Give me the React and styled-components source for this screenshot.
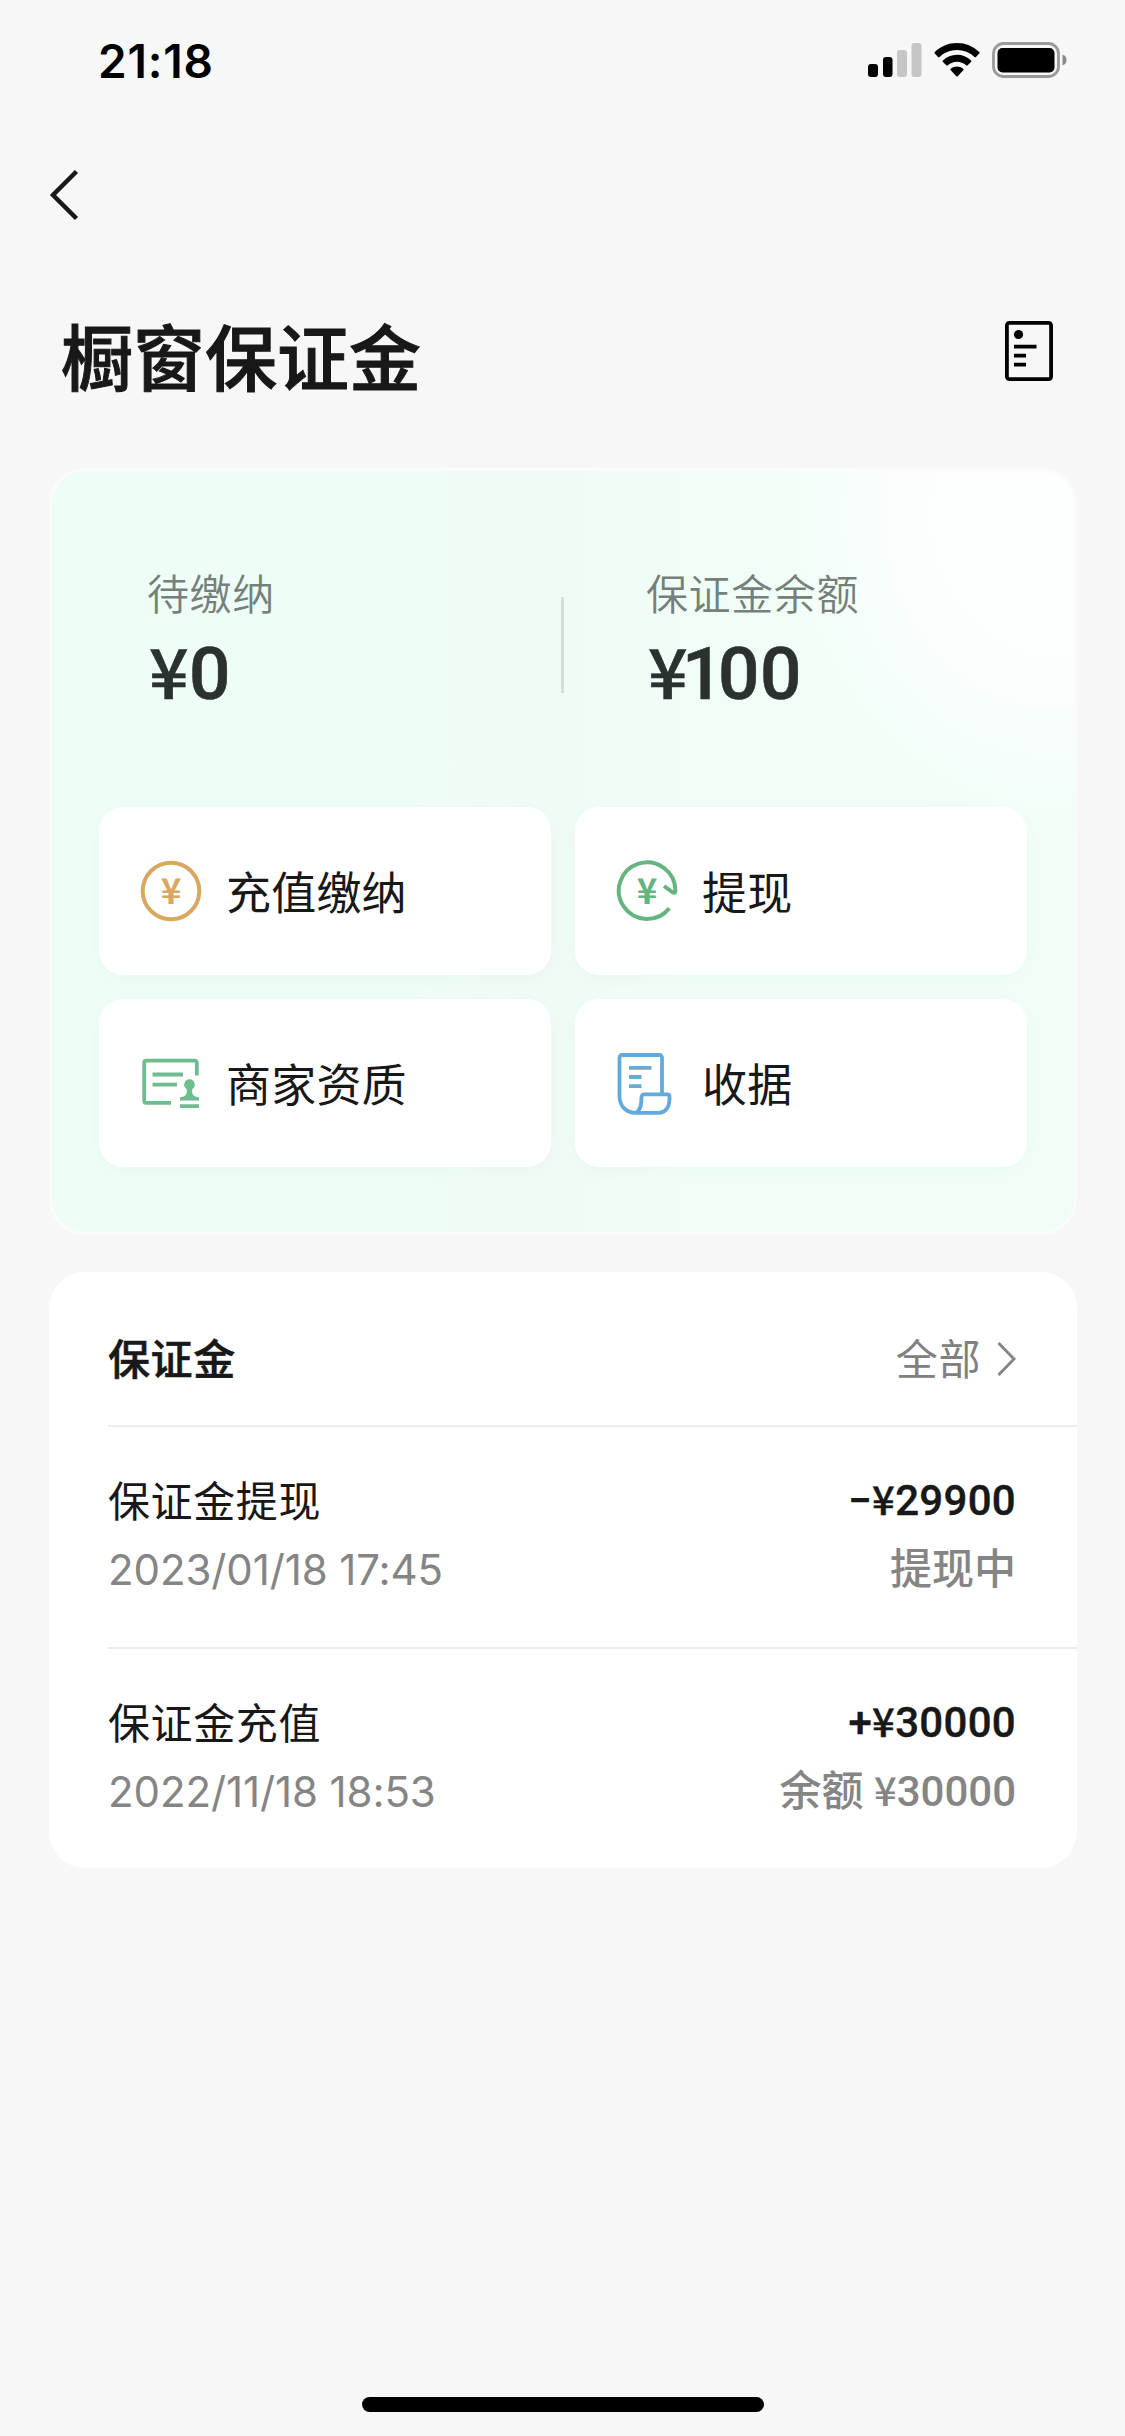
import React from "react";
import styled, { createGlobalStyle } from "styled-components";

const GlobalStyle = createGlobalStyle`
  * {
    box-sizing: border-box;
  }
  body {
    margin: 0;
    background: #f7f7f7;
    font-family: Inter, "Noto Sans CJK SC", sans-serif;
    color: #181818;
  }
  svg {
    display: block;
    flex: none;
  }
`;

const Page = styled.div`
  width: 1125px;
  height: 2436px;
  display: flex;
  flex-direction: column;
  background: #f7f7f7;
  overflow: hidden;
`;

const StatusBar = styled.header`
  height: 132px;
  padding: 34px 58px 0 98px;
  display: flex;
  justify-content: space-between;
  align-items: flex-start;
`;

const Time = styled.span`
  font: 600 46px/54px Inter, sans-serif;
  letter-spacing: 0.8px;
  color: #000;
`;

const StatusIcons = styled.div`
  display: flex;
  gap: 12px;
  padding-top: 8px;
`;

const NavBar = styled.nav`
  height: 126px;
  padding-left: 48px;
  display: flex;
  align-items: center;
`;

const TitleRow = styled.div`
  height: 210px;
  padding: 48px 72px 0 61px;
  display: flex;
  justify-content: space-between;
  align-items: flex-start;
`;

const Title = styled.h1`
  margin: 0;
  font: 500 72px/96px "Noto Sans CJK SC", sans-serif;
  -webkit-text-stroke: 1px #181818;
`;

const DocButton = styled.div`
  padding-top: 15px;
`;

const Main = styled.main`
  padding: 0 48px 0 49px;
  display: flex;
  flex-direction: column;
  gap: 37px;
  flex: 1;
`;

const BalanceCard = styled.section`
  height: 767px;
  padding: 0 48px 0 47px;
  border: 3px solid rgba(255, 255, 255, 0.55);
  border-radius: 36px;
  background:
    radial-gradient(ellipse 290px 330px at 98% 6%, #fdfefe 40%, rgba(250, 253, 252, 0) 100%),
    linear-gradient(90deg, rgba(240, 248, 244, 0) 36%, rgba(240, 249, 245, 0.7) 48%, rgba(241, 254, 248, 0.7) 62%),
    #eefdf5;
  background-clip: padding-box;
`;

const Balances = styled.div`
  height: 336px;
  padding: 96px 0 0 48px;
  display: flex;
`;

const Balance = styled.div`
  width: ${props => props.width};
  display: flex;
  flex-direction: column;
`;

const BalanceLabel = styled.span`
  font: 400 42px/50px "Noto Sans CJK SC", sans-serif;
  font-weight: 350;
  letter-spacing: 0.6px;
  color: #75807b;
`;

const BalanceValue = styled.span`
  margin: 18px 0 0 2px;
  font: 500 73px/76px Roboto, sans-serif;
  letter-spacing: 0.5px;
  color: #2a312e;
  -webkit-text-stroke: 0.6px #2a312e;
`;

// the digit 1 sits tight between its neighbours
const Tight = styled.span`
  letter-spacing: -5.5px;
`;

const YenSign = styled.span`
  font-family: "Noto Sans CJK SC", sans-serif;
  font-size: 0.95em;
  line-height: 1;
`;

const Separator = styled.div`
  width: 3px;
  height: 96px;
  margin: 30px 82px 0 0;
  background: #d6dedb;
`;

const Actions = styled.div`
  display: grid;
  grid-template-columns: 452px 452px;
  grid-auto-rows: 168px;
  gap: 24px;
`;

const Action = styled.div`
  padding-left: 41px;
  display: flex;
  align-items: center;
  gap: 24px;
  background: #fff;
  border-radius: 24px;
  box-shadow: 0 4px 14px rgba(120, 150, 135, 0.04);
`;

const ActionLabel = styled.span`
  padding-bottom: 1px;
  font: 400 45px/60px "Noto Sans CJK SC", sans-serif;
  letter-spacing: 0.2px;
`;

const RecordCard = styled.section`
  height: 596px;
  padding-left: 59px;
  border-radius: 36px;
  background: #fff;
`;

const RecordHeader = styled.div`
  height: 153px;
  padding: 16px 61px 0 0;
  display: flex;
  justify-content: space-between;
  align-items: center;
`;

const RecordTitle = styled.h2`
  margin: 0;
  font: 500 42px/60px "Noto Sans CJK SC", sans-serif;
  letter-spacing: 0.6px;
  -webkit-text-stroke: 0.6px #181818;
`;

const AllLink = styled.div`
  display: flex;
  align-items: center;
  gap: 16px;
  font: 400 42px/60px "Noto Sans CJK SC", sans-serif;
  letter-spacing: 0.6px;
  color: #808080;
`;

const ChevronSlot = styled.span`
  padding-top: 4px;
`;

const Record = styled.div`
  height: 222px;
  padding: 42px 61px 0 0;
  border-top: 2px solid #ebebeb;
  display: flex;
  justify-content: space-between;
`;

const Column = styled.div`
  display: flex;
  flex-direction: column;
  gap: 11px;
  align-items: ${props => (props.end ? "flex-end" : "flex-start")};
`;

const RecordName = styled.span`
  font: 400 42px/60px "Noto Sans CJK SC", sans-serif;
  letter-spacing: 0.6px;
`;

const RecordDate = styled.span`
  font: 400 42px/60px Inter, sans-serif;
  letter-spacing: -0.1px;
  color: #858585;
`;

const Amount = styled.span`
  padding-top: 3px;
  font: 500 42px/57px Roboto, sans-serif;
  letter-spacing: 0.3px;
  -webkit-text-stroke: 0.4px #181818;
`;

const RecordState = styled.span`
  font: 500 42px/60px Roboto, "Noto Sans CJK SC", sans-serif;
  color: #858585;
`;

const HomeIndicator = styled.div`
  width: 402px;
  height: 15px;
  margin: 0 auto 24px;
  border-radius: 8px;
  background: #000;
`;

const SignalIcon = () => (
  <svg width="54" height="36" viewBox="0 0 54 36">
    <rect x="0" y="22" width="10" height="13" rx="3" />
    <rect x="15" y="15" width="9.500" height="20" rx="3" />
    <rect x="29" y="8" width="10" height="27" rx="3" fill="#c6c6c6" />
    <rect x="43.500" y="1" width="10" height="34" rx="3" fill="#c6c6c6" />
  </svg>
);

const WifiIcon = () => (
  <svg width="46" height="36" viewBox="0 0 46 36">
    <path d="M23 1C14.400 1 6.500 4.400 0.800 10a1 1 0 0 0 0 1.500l3.200 3.400a1 1 0 0 0 1.500 0A25.400 25.400 0 0 1 23 8a25.400 25.400 0 0 1 17.500 6.900 1 1 0 0 0 1.500 0l3.200-3.400a1 1 0 0 0 0-1.500A31.800 31.800 0 0 0 23 1z" />
    <path d="M23 12.800c-5.400 0-10.300 2.100-14 5.600a1 1 0 0 0 0 1.500l3.300 3.400a1 1 0 0 0 1.500 0 13.600 13.600 0 0 1 18.400 0 1 1 0 0 0 1.500 0l3.300-3.400a1 1 0 0 0 0-1.500 20.200 20.200 0 0 0-14-5.600z" />
    <path d="M23 24.600c-2.300 0-4.500.8-6.200 2.200a1 1 0 0 0 0 1.500l5.500 5.900a1 1 0 0 0 1.400 0l5.500-5.900a1 1 0 0 0 0-1.500 9.800 9.800 0 0 0-6.200-2.200z" />
  </svg>
);

const BatteryIcon = () => (
  <svg width="75" height="36" viewBox="0 0 75 36">
    <rect x="1.500" y="1.500" width="65" height="33" rx="10" fill="none" stroke="#9a9a9a" strokeWidth="2.800" />
    <rect x="5.500" y="6" width="57" height="24.500" rx="5" />
    <path d="M70.500 12.500c3 1.200 4 3.200 4 5.500s-1 4.300-4 5.500z" fill="#8a8a8a" />
  </svg>
);

const BackIcon = () => (
  <svg width="32" height="52" viewBox="0 0 32 52" fill="none" stroke="#181818" strokeWidth="4.500">
    <path d="M28.500 2.500 5 26l23.500 23.500" />
  </svg>
);

const DocIcon = () => (
  <svg width="48" height="60" viewBox="0 0 48 60" fill="none" stroke="#000" strokeWidth="3.800">
    <rect x="1.900" y="1.900" width="44.200" height="56.200" rx="2.500" />
    <circle cx="13.500" cy="13.500" r="4.600" fill="#000" stroke="none" />
    <path d="M9 25.700h22.500M9 34.700h12M9 43.700h12" />
  </svg>
);

const IconYen = ({ x, color }) => (
  <text x={x} y="43.500" textAnchor="middle" fontFamily="Noto Sans CJK SC" fontSize="35" fontWeight="700" fill={color}>
    ¥
  </text>
);

const RechargeIcon = () => (
  <svg width="62" height="62" viewBox="0 0 62 62">
    <circle cx="31" cy="31" r="28.300" fill="none" stroke="#d9a860" strokeWidth="4" />
    <IconYen x="31" color="#d9a860" />
  </svg>
);

const WithdrawIcon = () => (
  <svg width="62" height="62" viewBox="0 0 62 62">
    <path
      d="M53.300 48.200A28.300 28.300 0 1 1 59.400 30.500q.2 3.600-3.100 1.600l-8.300-6.100"
      fill="none"
      stroke="#66b580"
      strokeWidth="4"
      strokeLinejoin="round"
    />
    <IconYen x="31" color="#66b580" />
  </svg>
);

const LicenseIcon = () => (
  <svg width="62" height="62" viewBox="0 0 62 62" fill="none" stroke="#6fbd8e" strokeWidth="3.800">
    <path d="M31 50.800H6a1.800 1.800 0 0 1-1.800-1.800V10.500a1.800 1.800 0 0 1 1.800-1.800h49a1.800 1.800 0 0 1 1.800 1.800V23.500" />
    <path d="M12.500 22.500h30.500M12.500 32.700h24.500M40 54.100h19" />
    <path
      d="M49.500 27.300a5.400 5.400 0 0 1 2.700 10c-.4 5 .6 7 6.800 8.300V48.500H40v-2.900c6.200-1.300 7.200-3.300 6.800-8.300a5.400 5.400 0 0 1 2.700-10z"
      fill="#6fbd8e"
      stroke="none"
    />
  </svg>
);

const ReceiptIcon = () => (
  <svg width="62" height="64" viewBox="0 0 62 64" fill="none" stroke="#62aade" strokeWidth="3.800" strokeLinejoin="round">
    <path d="M46 43V6.500a2.500 2.500 0 0 0-2.500-2.500H6a2.500 2.500 0 0 0-2.500 2.500V45c0 10 6.500 16.800 16 16.800h23c7 0 11.500-5.500 11-16.500a2 2 0 0 0-2-2H28a2.500 2.500 0 0 0-2.500 2.500c0 8.500-1 12.500-5 15.800" />
    <path d="M13 16.800h22.500M13 26h12.500M13 35.200h12.500" stroke="#6fa9d0" />
  </svg>
);

const ChevronIcon = () => (
  <svg width="19" height="36" viewBox="0 0 19 36" fill="none" stroke="#868686" strokeWidth="3">
    <path d="M1.500 2 17 18 1.500 34" />
  </svg>
);

const actions = [
  { label: "充值缴纳", Icon: RechargeIcon },
  { label: "提现", Icon: WithdrawIcon },
  { label: "商家资质", Icon: LicenseIcon },
  { label: "收据", Icon: ReceiptIcon },
];

const records = [
  { name: "保证金提现", date: "2023/01/18 17:45", sign: "−", amount: "29900", state: "提现中" },
  { name: "保证金充值", date: "2022/11/18 18:53", sign: "+", amount: "30000", state: "余额 ", rest: "30000" },
];

export default function App() {
  return (
    <Page>
      <GlobalStyle />
      <StatusBar>
        <Time>21:18</Time>
        <StatusIcons>
          <SignalIcon />
          <WifiIcon />
          <BatteryIcon />
        </StatusIcons>
      </StatusBar>
      <NavBar>
        <BackIcon />
      </NavBar>
      <TitleRow>
        <Title>橱窗保证金</Title>
        <DocButton>
          <DocIcon />
        </DocButton>
      </TitleRow>
      <Main>
        <BalanceCard>
          <Balances>
            <Balance width="414px">
              <BalanceLabel>待缴纳</BalanceLabel>
              <BalanceValue><YenSign>¥</YenSign>0</BalanceValue>
            </Balance>
            <Separator />
            <Balance width="300px">
              <BalanceLabel>保证金余额</BalanceLabel>
              <BalanceValue><Tight><YenSign>¥</YenSign>1</Tight>00</BalanceValue>
            </Balance>
          </Balances>
          <Actions>
            {actions.map(({ label, Icon }) => (
              <Action key={label}>
                <Icon />
                <ActionLabel>{label}</ActionLabel>
              </Action>
            ))}
          </Actions>
        </BalanceCard>
        <RecordCard>
          <RecordHeader>
            <RecordTitle>保证金</RecordTitle>
            <AllLink>
              全部
              <ChevronSlot>
                <ChevronIcon />
              </ChevronSlot>
            </AllLink>
          </RecordHeader>
          {records.map(record => (
            <Record key={record.date}>
              <Column>
                <RecordName>{record.name}</RecordName>
                <RecordDate>{record.date}</RecordDate>
              </Column>
              <Column end>
                <Amount>
                  {record.sign}
                  <YenSign>¥</YenSign>
                  {record.amount}
                </Amount>
                <RecordState>
                  {record.state}
                  {record.rest && <YenSign>¥</YenSign>}
                  {record.rest}
                </RecordState>
              </Column>
            </Record>
          ))}
        </RecordCard>
      </Main>
      <HomeIndicator />
    </Page>
  );
}
